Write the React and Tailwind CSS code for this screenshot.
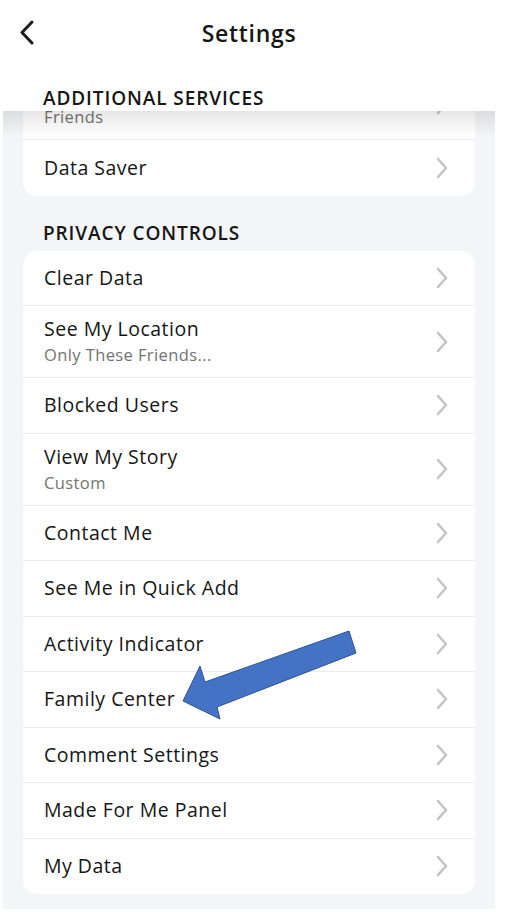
import React from "react";

const font = { fontFamily: "'Open Sans', Lato, sans-serif" };

const Chevron = () => (
  <svg width="14" height="24" viewBox="0 0 14 24" fill="none">
    <path d="M3 3 L11 12 L3 21" stroke="#c3c4c6" strokeWidth="2.6" strokeLinecap="round" strokeLinejoin="round" />
  </svg>
);

const Row = ({ title, sub, last }) => (
  <div
    className={
      "flex items-center justify-between pl-[21px] pr-[26px] " +
      (sub ? "h-[72px] " : "h-[55.5px] ") +
      (last ? "" : "border-b border-[#ececec]")
    }
  >
    <div className="flex flex-col">
      {title ? (
        <span className="text-[19.5px] tracking-[0.5px] leading-[24px] text-[#161616]">{title}</span>
      ) : (
        <span className="h-[24px]" />
      )}
      {sub && <span className="text-[16.5px] tracking-[0.4px] leading-[22px] text-[#737373] mt-[3px]">{sub}</span>}
    </div>
    <Chevron />
  </div>
);

const privacy = [
  { title: "Clear Data" },
  { title: "See My Location", sub: "Only These Friends..." },
  { title: "Blocked Users" },
  { title: "View My Story", sub: "Custom" },
  { title: "Contact Me" },
  { title: "See Me in Quick Add" },
  { title: "Activity Indicator" },
  { title: "Family Center" },
  { title: "Comment Settings" },
  { title: "Made For Me Panel" },
  { title: "My Data" },
];

export default function App() {
  return (
    <div className="w-[512px] h-[912px] bg-white relative overflow-hidden" style={font}>
      <div className="ml-[3px] w-[492px]">
        {/* header */}
        <div className="h-[111px] bg-white flex flex-col">
          <div className="h-[66px] relative flex items-center justify-center">
            <svg className="absolute left-[14px] top-[19px]" width="20" height="28" viewBox="0 0 20 28" fill="none">
              <path d="M15 3 L5 13.5 L15 24" stroke="#1c1c1c" strokeWidth="3" strokeLinecap="round" strokeLinejoin="round" />
            </svg>
            <span className="text-[23px] tracking-[0.7px] font-semibold text-[#161616]">Settings</span>
          </div>
          <div className="pl-[40px] pt-[21px] text-[19px] tracking-[0.9px] font-semibold leading-[22px] text-[#161616]">
            ADDITIONAL SERVICES
          </div>
        </div>

        {/* body */}
        <div className="h-[798px] bg-[#f4f5f6] relative overflow-hidden">
          <div className="mx-[20px] -mt-[43px] bg-white rounded-[14px]">
            <Row sub="Friends" />
            <Row title="Data Saver" last />
          </div>
          <div className="pl-[40px] pt-[26px] pb-[7px] text-[19px] tracking-[0.9px] font-semibold leading-[22px] text-[#161616]">
            PRIVACY CONTROLS
          </div>
          <div className="mx-[20px] bg-white rounded-[14px]">
            {privacy.map((r, i) => (
              <Row key={r.title} title={r.title} sub={r.sub} last={i === privacy.length - 1} />
            ))}
          </div>
          <div className="absolute top-0 left-0 right-0 h-[26px] bg-gradient-to-b from-black/10 to-transparent" />
        </div>
      </div>

      {/* annotation arrow */}
      <svg className="absolute left-0 top-0" width="512" height="912" viewBox="0 0 512 912">
        <polygon
          points="349,631 356,653 217,707 220,719 183,701 200,666 205,682"
          fill="#4472c4"
          stroke="#2f528f"
          strokeWidth="1"
          strokeLinejoin="round"
        />
      </svg>
    </div>
  );
}
